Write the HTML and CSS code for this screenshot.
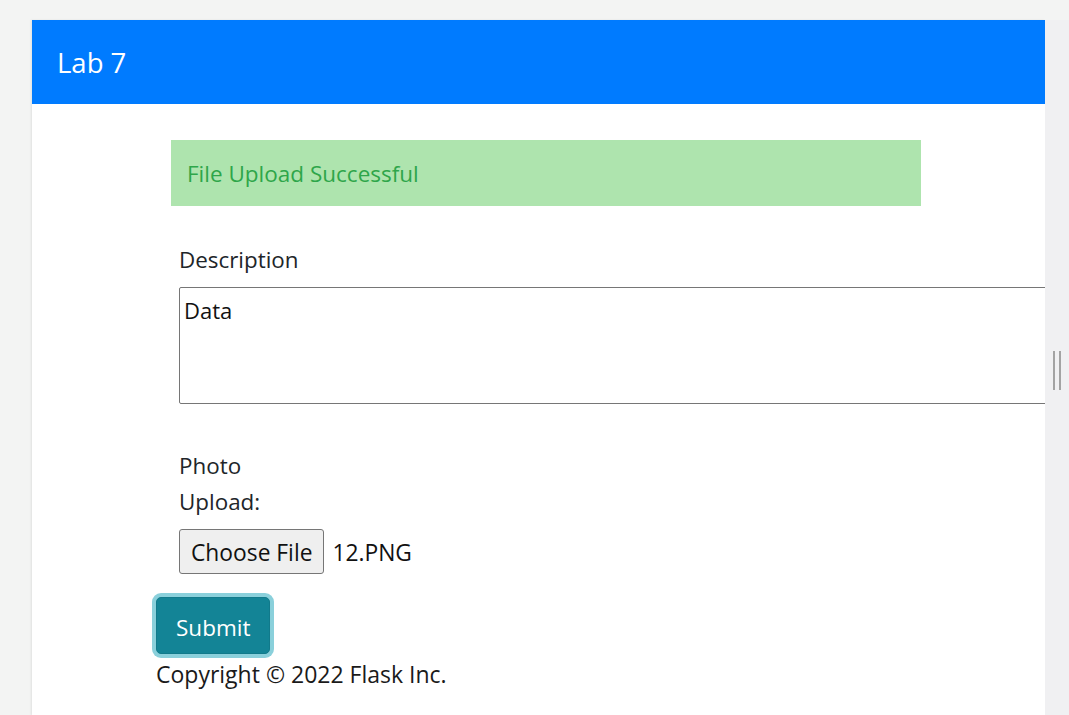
FILE: index.html
```html
<!DOCTYPE html>
<html lang="en">
<head>
<meta charset="utf-8">
<title>Lab 7</title>
<link rel="stylesheet" href="styles.css">
</head>
<body>
<div class="top-band"></div>
<div class="frame">
  <div class="gutter"></div>
  <div class="panel">
    <header class="navbar"><span class="brand">Lab 7</span></header>
    <main class="content">
      <div class="alert">File Upload Successful</div>
      <form class="form">
        <label class="label-desc">Description</label>
        <div class="textarea">Data</div>
        <label class="label-photo">Photo Upload:</label>
        <div class="file-row">
          <span class="file-btn">Choose File</span>
          <span class="file-name">12.PNG</span>
        </div>
      </form>
      <button class="submit" type="button">Submit</button>
      <footer class="copy">Copyright © 2022 Flask Inc.</footer>
    </main>
  </div>
  <div class="scroll-strip"><div class="grip"><span></span><span></span></div></div>
</div>
</body>
</html>
```

FILE: styles.css
```css
html, body {
  margin: 0;
  padding: 0;
  height: 100%;
  overflow: hidden;
}
body {
  background: #f3f4f3;
  font-family: "Open Sans", "Noto Sans", sans-serif;
  color: #212529;
}
.top-band {
  height: 20px;
}
.frame {
  display: flex;
  height: 695px;
}
.gutter {
  width: 32px;
  flex: none;
}
.panel {
  width: 1013px;
  flex: none;
  background: #fff;
  overflow: hidden;
  box-shadow: -1px 0 2px rgba(0,0,0,0.08);
}
.navbar {
  height: 84px;
  background: #007bff;
  display: flex;
  align-items: center;
  padding-left: 25px;
}
.brand {
  color: #fff;
  font-size: 27.5px;
  line-height: 36px;
  margin-top: 1px;
}
.content {
  padding: 36px 0 0 124px;
}
.alert {
  margin-left: 15px;
  width: 750px;
  box-sizing: border-box;
  height: 66px;
  background: #aee4ae;
  color: #2ea64a;
  font-size: 22.5px;
  line-height: 68px;
  padding-left: 16px;
}
.form {
  margin-left: 23px;
  display: flex;
  flex-direction: column;
  align-items: flex-start;
  font-size: 22.4px;
}
.label-desc {
  margin-top: 39px;
  line-height: 30px;
}
.textarea {
  margin-top: 12px;
  width: 900px;
  height: 117px;
  box-sizing: border-box;
  border: 1px solid #767676;
  border-radius: 2px;
  padding: 10px 4px;
  font-size: 22px;
  line-height: 24px;
  color: #111;
}
.label-photo {
  margin-top: 44px;
  width: 100px;
  line-height: 36px;
}
.file-row {
  margin-top: 9px;
  display: flex;
  align-items: center;
  gap: 8px;
}
.file-btn {
  height: 45px;
  box-sizing: border-box;
  border: 1px solid #767676;
  border-radius: 3px;
  background: #efefef;
  padding: 0 11px;
  font-size: 22.8px;
  line-height: 45px;
  color: #111;
}
.file-name {
  font-size: 22.8px;
  color: #111;
  margin-top: 2px;
}
.submit {
  margin-top: 23px;
  display: block;
  height: 57px;
  box-sizing: border-box;
  padding: 0 19px;
  border: 1px solid #117a8b;
  border-radius: 5px;
  background: #138496;
  color: #fff;
  font-family: inherit;
  font-size: 22.5px;
  line-height: 59px;
  box-shadow: 0 0 0 4px #8ad0db;
}
.copy {
  font-size: 23px;
  line-height: 40px;
  color: #1a1a1a;
}
.scroll-strip {
  width: 24px;
  flex: none;
  background: #f0f0f2;
  display: flex;
  flex-direction: column;
  align-items: center;
}
.grip {
  margin-top: 331px;
  display: flex;
  gap: 4px;
}
.grip span {
  width: 2px;
  height: 39px;
  background: #a3a3a3;
}
```
